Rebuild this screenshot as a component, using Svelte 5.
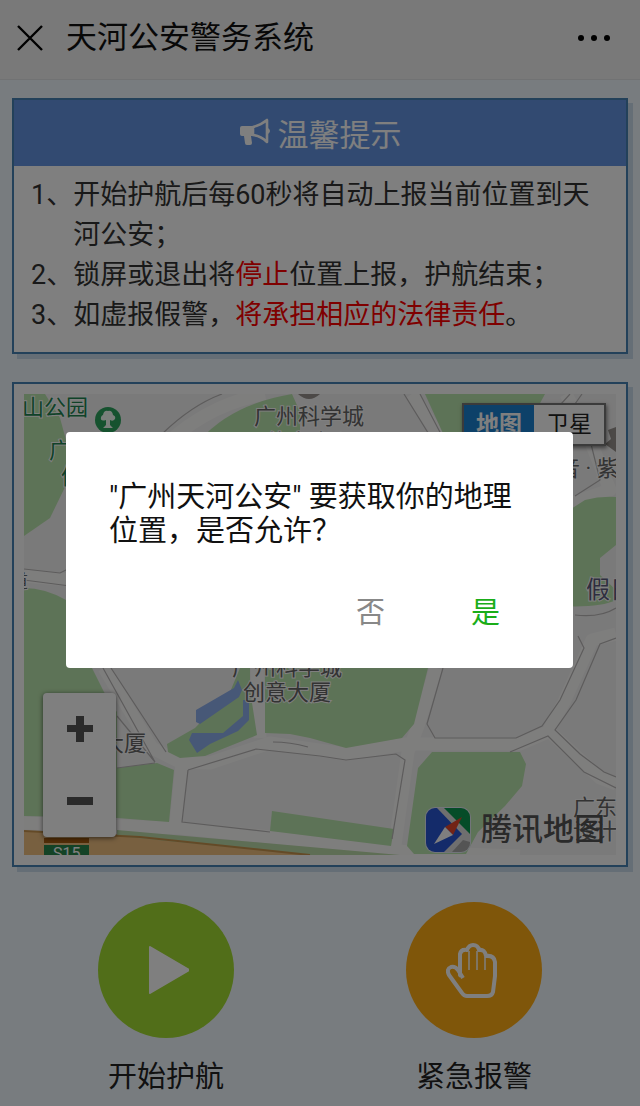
<script lang="ts">
	let dialogOpen = $state(true);
	let mapType = $state('map');
</script>

<div class="page">
	<header>
		<button class="icon-btn" aria-label="关闭">
			<svg width="26" height="26" viewBox="0 0 26 26" stroke="#000" stroke-width="2.4">
				<path d="M1 1L25 25M25 1L1 25" />
			</svg>
		</button>
		<h1>天河公安警务系统</h1>
		<button class="icon-btn" aria-label="更多">
			<svg width="34" height="8" viewBox="0 0 34 8">
				<circle cx="4" cy="4" r="3" />
				<circle cx="17" cy="4" r="3" />
				<circle cx="30" cy="4" r="3" />
			</svg>
		</button>
	</header>

	<main>
		<section class="card">
			<h2>
				<svg width="32" height="28" viewBox="0 0 32 28" fill="#fff">
					<path d="M3 8h11v10h-2l1 7q0 2-2 2H8q-2 0-2-2L5 18H3q-2 0-2-2v-6q0-2 2-2z" />
					<path
						d="M14 9Q22 7 28 2V24Q22 18 14 17z"
						fill="none"
						stroke="#fff"
						stroke-width="2.6"
						stroke-linejoin="round"
					/>
					<path d="M29 10q4 3 0 6z" />
				</svg>
				温馨提示
			</h2>
			<div class="tips">
				<p><span>1、</span><span>开始护航后每60秒将自动上报当前位置到天河公安；</span></p>
				<p><span>2、</span><span>锁屏或退出将<em>停止</em>位置上报，护航结束；</span></p>
				<p><span>3、</span><span>如虚报假警，<em>将承担相应的法律责任</em>。</span></p>
			</div>
		</section>

		<section class="card map-card">
			<div class="map">
				<svg class="tiles" viewBox="24 394 592 461">
					<rect x="24" y="394" width="592" height="461" fill="#f5f4f4" />

					<!-- roads -->
					<g fill="none" stroke="#fdfcfb" stroke-width="13" stroke-linejoin="round">
						<path d="M104 668L152 748L180 762L210 763L270 743L346 754L406 744L520 744L548 732L564 702L592 640L616 634" />
						<path d="M436 668L418 726L408 752L394 852" />
						<path d="M257 668L260 738M182 764L176 824M550 732L600 778L616 784" />
						<path d="M24 823L180 828L300 840L408 852L520 856" />
						<path d="M160 450Q205 405 265 394M412 394L442 440M24 576L70 580M566 394L590 440L610 490L570 504" />
					</g>

					<!-- parks -->
					<g fill="#bbe6ae">
						<path d="M24 394H45L60 418L66 440V485L50 518L24 536z" />
						<path d="M24 588Q45 588 66 600L92 668L104 692L117 712V818L24 816z" />
						<path d="M200 440Q232 404 292 394L300 412V440z" />
						<path d="M425 394H545L520 440H446z" />
						<path d="M560 516L585 500Q600 496 616 497V545L600 558V575L616 590V600Q600 608 560 606z" />
						<path d="M117 768L157 763L174 770L169 822L117 818z" />
						<path d="M240 668H250V690L257 735L205 756L180 758L168 752L167 744L195 728L230 692z" />
						<path d="M265 668H428L414 724L402 738L346 748L310 738L290 734L265 733z" />
						<path d="M272 811L394 829L391 846L270 831z" />
						<path d="M432 752H520L526 764L522 786L505 806L478 832L466 854H414L407 846L418 768z" />
					</g>

					<!-- lake -->
					<path d="M238 680L242 690L239 697L200 724L196 722V710L234 688z" fill="#8fb0ee" />
					<path d="M243 700H249V720L238 731L210 744L197 753L189 740L192 733L223 733L243 716z" fill="#8fb0ee" />

					<!-- road edges -->
					<g fill="none" stroke="#bab8b8" stroke-width="1.200">
						<path d="M162 434Q192 405 222 394M404 394L430 436M420 394L442 436" />
						<path d="M24 569L60 573L70 568M24 580L70 586" />
						<path d="M103 668L155 762M111 668L166 752M117 716L155 762M117 768L155 763" />
						<path d="M443 668L427 724L435 738H516L542 726L560 700L584 648L578 636" />
						<path d="M616 638L600 644L576 700L555 730L580 754L604 772L616 777" />
						<path d="M510 752L548 736L584 772L616 788" />
						<path d="M188 770L256 749L320 756L346 760L396 754L405 760L392 839M188 770L182 822L270 832" />
						<path d="M273 742Q290 742 308 747" />
						<path d="M590 440L600 480L575 496M575 615Q600 618 616 608" />
						<path d="M570 394L552 414M582 394L568 414" />
					</g>

					<!-- expressway -->
					<path d="M24 831L140 835L320 855H24z" fill="#f0c081" />
					<path d="M117 830L400 855H310L117 836z" fill="#bddcaa" />
					<path d="M24 831L140 837L310 855" fill="none" stroke="#c8954e" stroke-width="2" />
					<rect x="44" y="838" width="45" height="5" fill="#a65c10" />
					<rect x="44" y="845" width="45" height="10" fill="#28864c" />
					<text class="route" x="53" y="859">S15</text>

					<!-- place labels -->
					<text class="green" x="22" y="415" font-size="22">山公园</text>
					<text class="green" x="49" y="458" font-size="22">广</text>
					<text class="green" x="61" y="484" font-size="22">体</text>
					<circle cx="108" cy="420" r="13" fill="#2ca45e" />
					<path
						d="M106 425V420Q100 422 101 417Q102 415 103 415Q104 410 108 411Q112 410 113 415Q116 416 115 419Q113 422 110 420V425L113 428H103z"
						fill="#f5fff6"
					/>
					<text x="254" y="424" font-size="22">广州科学城</text>
					<text x="266" y="450" font-size="22">体育中心</text>
					<path d="M298 394H320Q309 404 298 394z" fill="#98938f" />
					<path d="M608 430L616 427V452L605 444L611 439z" fill="#98938f" />
					<text x="558" y="476" font-size="22">音 · 紫</text>
					<text class="purple" x="586" y="598" font-size="24">假日</text>
					<text x="10" y="588" font-size="18">道</text>
					<text x="232" y="675" font-size="22">广州科学城</text>
					<text x="243" y="700" font-size="22">创意大厦</text>
					<text x="102" y="751" font-size="22">大厦</text>
					<text x="573" y="815" font-size="22">广东省</text>
					<text x="573" y="839" font-size="22">设计</text>
				</svg>

				<div class="map-type">
					<button class:active={mapType === 'map'} onclick={() => (mapType = 'map')}>地图</button>
					<button class:active={mapType === 'satellite'} onclick={() => (mapType = 'satellite')}>卫星</button>
				</div>

				<div class="zoom">
					<button aria-label="放大">
						<svg width="26" height="26" viewBox="0 0 26 26"><path d="M9 0h8v9h9v7h-9v10H9V16H0V9h9z" /></svg>
					</button>
					<button aria-label="缩小">
						<svg width="26" height="26" viewBox="0 0 26 26"><path d="M0 9h26v8H0z" /></svg>
					</button>
				</div>

				<div class="brand">
					<svg width="46" height="46" viewBox="0 0 46 46">
						<defs>
							<clipPath id="tile"><rect x="1" y="1" width="44" height="44" rx="9" /></clipPath>
						</defs>
						<rect width="46" height="46" rx="10" fill="#e4eaf4" />
						<g clip-path="url(#tile)">
							<rect width="46" height="46" fill="#dedede" />
							<path d="M1 1H12L37 27L19 45H1z" fill="#2857d5" />
							<path d="M19 1H45V27z" fill="#0a9950" />
							<path d="M45 35V45H27L38 33z" fill="#a8a8a8" />
						</g>
						<path d="M37 10L20 20L28 28z" fill="#e5472c" />
						<path d="M20 20L9 37L28 28z" fill="#fff" />
					</svg>
					<span>腾讯地图</span>
				</div>
			</div>
		</section>

		<div class="actions">
			<button>
				<span class="circle start">
					<svg width="46" height="50" viewBox="0 0 46 50">
						<path d="M7 2L46 25L7 48z" fill="#fff" stroke="#fff" stroke-width="2" stroke-linejoin="round" />
					</svg>
				</span>
				开始护航
			</button>
			<button>
				<span class="circle alarm">
					<svg width="56" height="56" viewBox="0 0 56 56" fill="none" stroke="#fff" stroke-linejoin="round">
						<path
							d="M15 34L14 33V12Q15 7 21 8Q23 3 27 3Q32 3 33 8Q39 7 40 14Q48 13 49 20V34L47 50Q46 54 41 54H21Q18 54 16 51L3 33Q0 27 5 25Q9 24 12 28L17 36"
							stroke-width="4"
						/>
						<path d="M23 9V28M31 9V28M39 15V28" stroke-width="1.500" />
					</svg>
				</span>
				紧急报警
			</button>
		</div>
	</main>

	{#if dialogOpen}
		<div class="overlay">
			<div class="dialog" role="dialog" aria-modal="true" aria-labelledby="dialog-text">
				<p id="dialog-text">"广州天河公安" 要获取你的地理位置，是否允许？</p>
				<div class="dialog-actions">
					<button onclick={() => (dialogOpen = false)}>否</button>
					<button class="confirm" onclick={() => (dialogOpen = false)}>是</button>
				</div>
			</div>
		</div>
	{/if}
</div>

<style>
	:global(body) {
		margin: 0;
		background: #f0f8ff;
	}

	.page {
		position: relative;
		box-sizing: border-box;
		min-height: 100vh;
		background: #f0f8ff;
		color: #333;
		font-family: Roboto, 'Noto Sans CJK SC', sans-serif;
	}

	button {
		padding: 0;
		border: none;
		background: none;
		color: inherit;
		font: inherit;
		cursor: pointer;
	}

	svg {
		display: block;
	}

	h1,
	h2,
	p {
		margin: 0;
		font-weight: 400;
	}

	header {
		display: flex;
		align-items: center;
		gap: 23px;
		box-sizing: border-box;
		height: 80px;
		padding: 0 29px 4px 17px;
		border-bottom: 1px solid #e2e4e6;
		background: #f3f3f3;
	}

	h1 {
		flex: 1;
		color: #111;
		font-size: 31px;
		line-height: 40px;
	}

	main {
		display: flex;
		flex-direction: column;
		gap: 28px;
		padding: 18px 12px 9px;
	}

	.card {
		border: 2px solid #4682b4;
		background: #fff;
		box-shadow: 5px 5px 0 #cbdcec;
	}

	h2 {
		display: flex;
		align-items: center;
		justify-content: center;
		gap: 7px;
		box-sizing: border-box;
		height: 66px;
		padding-bottom: 2px;
		background: #6495e3;
		color: #fff;
		font-size: 31px;
	}

	.tips {
		padding: 9px 16px 17px 17px;
		font-size: 27px;
		line-height: 40px;
	}

	.tips p {
		display: flex;
	}

	.tips p span:first-child {
		flex: none;
	}

	em {
		color: #f00;
		font-style: normal;
	}

	.map-card {
		padding: 10px;
	}

	.map {
		position: relative;
		overflow: hidden;
	}

	.tiles {
		width: 100%;
		height: auto;
	}

	.tiles text {
		fill: #666;
		stroke: #fff;
		stroke-width: 2px;
		paint-order: stroke;
	}

	.tiles .green {
		fill: #218551;
	}

	.tiles .purple {
		fill: #5c5c7c;
	}

	.tiles .route {
		fill: #fff;
		stroke: none;
		font-size: 16px;
	}

	.map-type {
		position: absolute;
		top: 9px;
		right: 10px;
		display: flex;
		border: 2px solid #777;
		background: #fff;
		box-shadow: 1px 2px 4px rgba(0, 0, 0, 0.5);
		font-size: 23px;
	}

	.map-type button {
		width: 70px;
		height: 39px;
		padding-bottom: 6px;
		color: #222;
	}

	.map-type .active {
		background: #1a82d2;
		color: #fff;
		font-weight: 700;
	}

	.zoom {
		position: absolute;
		bottom: 18px;
		left: 19px;
		display: flex;
		flex-direction: column;
		border-radius: 4px;
		background: #fff;
		box-shadow: 0 1px 5px rgba(0, 0, 0, 0.6);
	}

	.zoom button {
		display: grid;
		place-items: center;
		width: 73px;
		height: 72px;
		fill: #555;
	}

	.brand {
		position: absolute;
		right: 11px;
		bottom: 2px;
		display: flex;
		align-items: center;
		gap: 10px;
		color: #555;
		font-size: 31px;
		font-weight: 500;
		line-height: 46px;
	}

	.actions {
		display: grid;
		grid-template-columns: 1fr 1fr;
		padding-top: 7px;
	}

	.actions button {
		display: flex;
		flex-direction: column;
		align-items: center;
		gap: 19px;
		color: #222;
		font-size: 29px;
		line-height: 40px;
	}

	.circle {
		display: grid;
		place-items: center;
		width: 136px;
		height: 136px;
		border-radius: 50%;
	}

	.start {
		background: #a2dc32;
	}

	.alarm {
		background: #ffac14;
	}

	.overlay {
		position: absolute;
		inset: 0;
		display: flex;
		align-items: center;
		padding: 0 67px 6px 66px;
		background: rgba(0, 0, 0, 0.5);
	}

	.dialog {
		flex: 1;
		padding: 48px 43px 38px;
		border-radius: 4px;
		background: #fff;
		color: #111;
		font-size: 29px;
		line-height: 34px;
	}

	.dialog-actions {
		display: flex;
		justify-content: flex-end;
		gap: 86px;
		padding: 48px 30px 0 0;
		color: #888;
	}

	.confirm {
		color: #1aad19;
	}
</style>
